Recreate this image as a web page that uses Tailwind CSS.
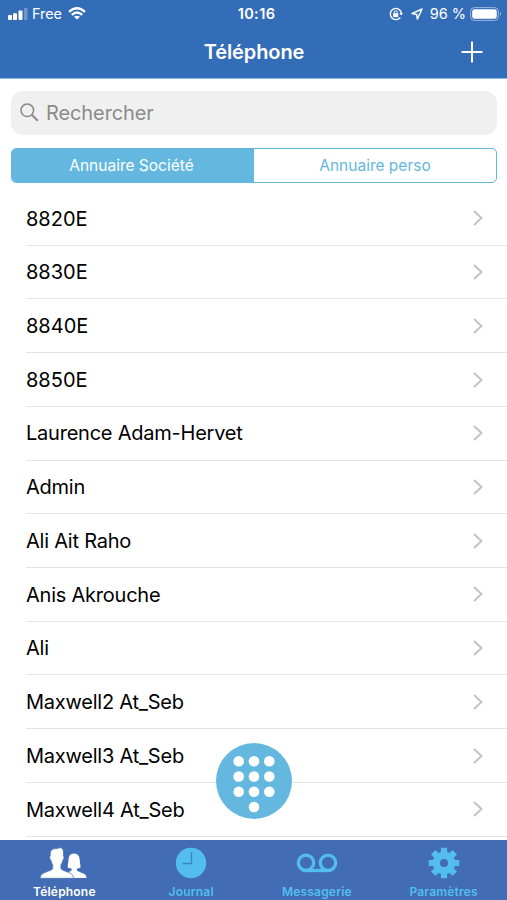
<!DOCTYPE html>
<html lang="fr">
<head>
<meta charset="utf-8">
<title>Téléphone</title>
<script src="https://cdn.jsdelivr.net/npm/@tailwindcss/browser@4"></script>
</head>
<body class="bg-white font-['Inter','Liberation_Sans',sans-serif]">
<div class="relative flex h-[900px] w-[507px] flex-col overflow-hidden bg-white text-black">
  <header class="h-[79px] shrink-0 border-b border-[#8db8e8] bg-[#346db7] text-white">
    <div class="grid h-[27px] grid-cols-3 items-center px-2">
      <div class="flex items-center text-[14.5px]">
        <svg class="h-[12px] w-[20px]" viewBox="0 0 20 12" fill="#fff"><rect x="0" y="7" width="4" height="5" rx="1"/><rect x="5" y="5.2" width="4" height="6.8" rx="1"/><rect x="10.500" y="2.500" width="4" height="9.500" rx="1"/><rect x="16" y="0" width="3.500" height="12" rx="1" opacity=".3"/></svg>
        <span class="ml-[4px] tracking-[-0.1px]">Free</span>
        <svg class="ml-[6px] h-[13px] w-[18px]" viewBox="0 0 18 13" fill="none" stroke="#fff" stroke-width="2.400"><path d="M1 4.800Q9-2.200 17 4.800"/><path d="M3.800 7.800Q9 3.200 14.200 7.800"/><path d="M9 12.600 6 9.800Q9 7.600 12 9.800Z" fill="#fff" stroke="none"/></svg>
      </div>
      <div class="pl-[18px] text-center text-[14.5px] font-semibold"><span class="-ml-[3px] pr-[9px] tracking-[0.4px]">10:16</span></div>
      <div class="-mr-[3px] flex items-center justify-end text-[14.5px]">
        <svg class="mr-[8px] h-[14px] w-[14px] shrink-0" viewBox="0 0 14 14" fill="none" stroke="#fff" stroke-width="1.400"><path d="M11.300 10.500A5.600 5.600 0 1 1 12.400 6"/><path d="M10.300 6h3.600l-1.800 2.600z" fill="#fff" stroke="none"/><rect x="4.200" y="6.200" width="5" height="3.900" fill="#fff" stroke="none"/><path d="M5.200 6.400V5.200a1.500 1.500 0 0 1 3 0v1.200" stroke-width="1"/></svg>
        <svg class="mr-[7px] h-[12px] w-[12px] shrink-0" viewBox="0 0 12 12" fill="none" stroke="#fff" stroke-width="1.500" stroke-linejoin="round"><path d="M11 1 1 5.600l4.600.8.800 4.600z"/></svg>
        <span class="whitespace-nowrap">96&nbsp;%</span>
        <svg class="ml-[4px] h-[14px] w-[32px] shrink-0" viewBox="0 0 32 14"><rect x=".6" y=".6" width="27.800" height="12.800" rx="3.800" fill="none" stroke="#fff" stroke-opacity=".5"/><rect x="2.200" y="2.200" width="24.600" height="9.600" rx="2.400" fill="#fff"/><path d="M30 4.800q2 2.200 0 4.400z" fill="#fff" opacity=".5"/></svg>
      </div>
    </div>
    <div class="grid h-[50px] grid-cols-[60px_1fr_60px] items-center">
      <span></span>
      <h1 class="pl-px text-center text-[20px] font-semibold tracking-[-0.1px]">Téléphone</h1>
      <svg class="-mt-px ml-[14px] h-[22px] w-[22px]" viewBox="0 0 22 22" stroke="#fff" stroke-width="2"><path d="M11 .5v21M.5 11h21"/></svg>
    </div>
  </header>

  <div class="mx-[11px] mt-[12px] flex h-[43.500px] w-[486px] shrink-0 items-center rounded-[12px] bg-[#f0f0f0] pl-[9px]">
    <svg class="h-[19px] w-[19px]" viewBox="0 0 19 19" fill="none" stroke="#8a8a8a"><circle cx="7.300" cy="7.300" r="6.300" stroke-width="1.500"/><path d="m12 12 5.800 5.800" stroke-width="2"/></svg>
    <span class="ml-[7px] text-[20px] tracking-[-0.1px] text-[#8b8b8b]">Rechercher</span>
  </div>

  <div class="mx-[11px] mt-[13px] grid h-[35.500px] w-[486px] shrink-0 grid-cols-2 overflow-hidden rounded-[5px] border border-[#64b8e0] text-center text-[15.500px] leading-[34px]">
    <span class="bg-[#64b8e0] pr-[3px] text-white">Annuaire Société</span>
    <span class="text-[#64b8e0]">Annuaire perso</span>
  </div>

  <main id="contacts" class="mt-[9px] min-h-0 flex-1 overflow-hidden pl-[26px]"></main>

  <footer class="grid h-[60px] shrink-0 grid-cols-4 bg-[#426db4] text-[12px] font-semibold tracking-[0.2px] text-[#53bdef]">
    <div class="flex flex-col items-center pl-[2px] pt-[7px] text-white">
      <svg class="-ml-[2px] h-[32px] w-[48px]" viewBox="0 0 48 32" fill="#fff"><path d="M35 6.500C31 6.500 29.600 9.500 29.500 13L28.600 20.200C30 21.200 31.600 21.500 32.600 21.500V23.500L28 26V31H47.500C47.500 28 46 27 43.500 26.200L38 23.800V21.500C39 21.500 40.400 21.200 41.600 20.200L40.700 13C40.600 9.500 39 6.500 35 6.500Z"/><path d="M18 1.600C20 .8 22.500 .3 22.700 1.200C24.600 2 24.700 4.500 24.300 8.800C25.500 9.300 24.900 13 23.600 13.500C23.300 15.500 22.700 16.900 21.900 17.700V21.500C22.300 22.800 24.500 23.400 29 25.200C32.500 26.600 34.500 27.500 34.500 31.300H1.300C1.300 27.500 3.200 26.600 6.700 25.200C11.200 23.400 13.400 22.800 13.700 21.500V17.700C13 16.900 12.400 15.500 12.100 13.500C10.800 13 10.200 9.300 11.300 8.800C10.900 4 12.200 1.600 18 1.600Z" stroke="#426db4" stroke-width=".7"/></svg>
      <span class="mt-[5px] leading-[15px]">Téléphone</span>
    </div>
    <div class="flex flex-col items-center pl-[2px] pt-[7px]">
      <svg class="h-[32px] w-[32px]" viewBox="0 0 32 32"><circle cx="16" cy="16" r="15.200" fill="#53bdef"/><path d="M16.500 5v11.500h-9" fill="none" stroke="#3888bf" stroke-width="1.300"/></svg>
      <span class="mt-[5px] leading-[15px]">Journal</span>
    </div>
    <div class="flex flex-col items-center pt-[7px]">
      <svg class="h-[32px] w-[42px]" viewBox="0 0 42 32" fill="none" stroke="#53bdef" stroke-width="3.300"><circle cx="10" cy="15.800" r="7.700"/><circle cx="32" cy="15.800" r="7.700"/><path d="M10 23.500h22"/></svg>
      <span class="mt-[5px] leading-[15px]">Messagerie</span>
    </div>
    <div class="flex flex-col items-center pt-[7px]">
      <svg class="h-[32px] w-[32px]" viewBox="-16 -16 32 32"><g stroke="#53bdef" stroke-width="6.200"><path d="M0-15.300v30.600M-15.300 0h30.600M-10.800-10.800l21.600 21.600M10.800-10.800l-21.600 21.600"/></g><circle r="11.300" fill="#53bdef"/><circle r="4" fill="#426db4"/></svg>
      <span class="mt-[5px] leading-[15px]">Paramètres</span>
    </div>
  </footer>

  <button class="absolute left-[216px] top-[743px] h-[76px] w-[76px] rounded-full bg-[#64b8e0]" aria-label="Clavier">
    <svg class="h-[76px] w-[76px]" viewBox="0 0 76 76" fill="#fff"><circle cx="22.700" cy="18.300" r="5.300"/><circle cx="38" cy="18.300" r="5.300"/><circle cx="53.300" cy="18.300" r="5.300"/><circle cx="22.700" cy="33.500" r="5.300"/><circle cx="38" cy="33.500" r="5.300"/><circle cx="53.300" cy="33.500" r="5.300"/><circle cx="22.700" cy="48.700" r="5.300"/><circle cx="38" cy="48.700" r="5.300"/><circle cx="53.300" cy="48.700" r="5.300"/><circle cx="38" cy="64" r="5.300"/></svg>
  </button>
</div>
<script>
  const names = ["8820E", "8830E", "8840E", "8850E", "Laurence Adam-Hervet", "Admin", "Ali Ait Raho", "Anis Akrouche", "Ali", "Maxwell2 At_Seb", "Maxwell3 At_Seb", "Maxwell4 At_Seb"];
  document.getElementById("contacts").innerHTML = names.map(n => `
    <div class="flex h-[53.730px] items-center justify-between border-b border-[#e4e4e6] pr-[24.500px]">
      <span class="pt-[0.500px] text-[20px] ${/^\d/.test(n) ? "tracking-normal" : "tracking-[-0.23px]"}">${n}</span>
      <svg class="h-[16px] w-[10px]" viewBox="0 0 10 16" fill="none" stroke="#c3c3c7" stroke-width="2"><path d="m1 1 7.500 7L1 15"/></svg>
    </div>`).join("");
</script>
</body>
</html>
